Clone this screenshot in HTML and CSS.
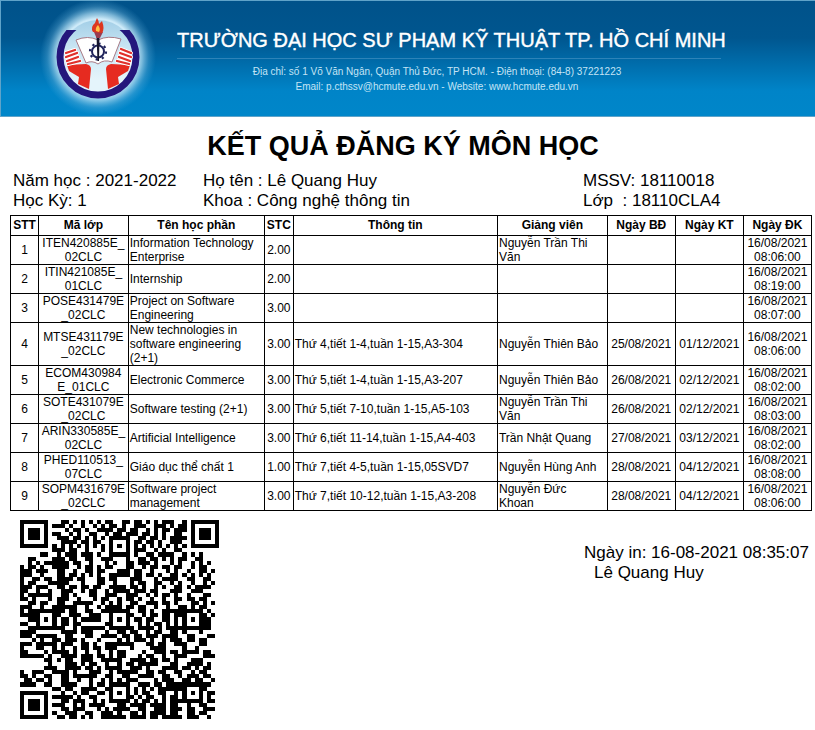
FILE: index.html
```html
<!DOCTYPE html>
<html lang="vi">
<head>
<meta charset="utf-8">
<meta name="viewport" content="width=device-width, initial-scale=1">
<title>Kết quả đăng ký môn học</title>
<link rel="stylesheet" href="styles.css">
</head>
<body>
<header class="banner">
  <svg class="logo" viewBox="40 0 120 116" role="img" aria-label="Logo">
    <defs>
      <radialGradient id="glow">
        <stop offset="0.66" stop-color="#cdeaf8"/>
        <stop offset="0.76" stop-color="#a5d6ee" stop-opacity="0.75"/>
        <stop offset="0.88" stop-color="#70b8df" stop-opacity="0.3"/>
        <stop offset="1" stop-color="#5bb0dd" stop-opacity="0"/>
      </radialGradient>
      <linearGradient id="inner" x1="0" y1="0" x2="0" y2="1">
        <stop offset="0" stop-color="#a3cfe7"/>
        <stop offset="0.35" stop-color="#c7e4f3"/>
        <stop offset="0.8" stop-color="#e4f4fb"/>
      </linearGradient>
      <clipPath id="open"><rect x="50" y="29" width="100" height="75"/></clipPath>
    </defs>
    <circle cx="98" cy="56" r="58" fill="url(#glow)"/>
    <circle cx="98" cy="56" r="37" fill="url(#inner)"/>
    <g clip-path="url(#open)"><circle cx="98" cy="56" r="38" fill="none" stroke="#24167c" stroke-width="7"/></g>
    <path d="M76 39Q88 34 98 39Q108 34 121 38L112 61Q104 58 98 63Q92 59 86 62Z" fill="#fff" stroke="#a87a86" stroke-width="1"/>
    <g fill="none" stroke="#20245c">
      <circle cx="98" cy="50.500" r="6" stroke-width="2"/>
      <circle cx="98" cy="50.500" r="8" stroke-width="2.200" stroke-dasharray="2.300 3.983"/>
    </g>
    <path d="M96.500 35H99.500L99 60H97.500Z" fill="#15152d"/>
    <path d="M94 31H103L100 37H96.500Z" fill="#983b50"/>
    <path d="M93 31Q90 26 95 22Q96 19 97 17Q99 20 99 23L102 20Q105 28 102 32Z" fill="#dc3620"/>
    <path d="M96 30Q95 27 98 24Q101 28 99 31Z" fill="#ffc044"/>
    <path d="M67 64L86 63Q91 64 91 68L89 88L78 83L79 76L69 70Z" fill="#e62b20"/>
    <path d="M130 64L111 63Q106 64 106 68L108 88L119 83L118 76L128 70Z" fill="#e62b20"/>
    <g fill="none" stroke="#fff" stroke-width="4" stroke-linecap="round">
      <path d="M66 52L75 49M66 56L77 52M67 60L78 56M68 63L80 60M131 52L121 48M131 56L120 52M130 60L119 56M129 63L117 60"/>
    </g>
    <g fill="none" stroke="#e0302b" stroke-width="2.300" stroke-linecap="round">
      <path d="M66 52L75 49M66 56L77 52M67 60L78 56M68 63L80 60M131 52L121 48M131 56L120 52M130 60L119 56M129 63L117 60"/>
    </g>
  </svg>
  <div class="school">
    <p class="school-name">TRƯỜNG ĐẠI HỌC SƯ PHẠM KỸ THUẬT TP. HỒ CHÍ MINH</p>
    <p class="school-contact">Địa chỉ: số 1 Võ Văn Ngân, Quận Thủ Đức, TP HCM. - Điện thoại: (84-8) 37221223<br>Email: p.cthssv@hcmute.edu.vn - Website: www.hcmute.edu.vn</p>
  </div>
</header>
<main class="page">
  <h1>KẾT QUẢ ĐĂNG KÝ MÔN HỌC</h1>
  <section class="student">
    <p>Năm học : 2021-2022<br>Học Kỳ: 1</p>
    <p>Họ tên : Lê Quang Huy<br>Khoa : Công nghệ thông tin</p>
    <p class="ids">MSSV: 18110018<br>Lớp  : 18110CLA4</p>
  </section>
  <table>
    <colgroup><col class="c-no"><col class="c-code"><col class="c-name"><col class="c-credit"><col class="c-info"><col class="c-teacher"><col class="c-date"><col class="c-date"><col class="c-date"></colgroup>
    <thead><tr><th>STT</th><th>Mã lớp</th><th>Tên học phần</th><th>STC</th><th>Thông tin</th><th>Giảng viên</th><th>Ngày BĐ</th><th>Ngày KT</th><th>Ngày ĐK</th></tr></thead>
    <tbody>
      <tr><td>1</td><td>ITEN420885E_<br>02CLC</td><td>Information Technology Enterprise</td><td>2.00</td><td></td><td>Nguyễn Trần Thi Văn</td><td></td><td></td><td>16/08/2021 08:06:00</td></tr>
      <tr><td>2</td><td>ITIN421085E_<br>01CLC</td><td>Internship</td><td>2.00</td><td></td><td></td><td></td><td></td><td>16/08/2021 08:19:00</td></tr>
      <tr><td>3</td><td>POSE431479E<br>_02CLC</td><td>Project on Software Engineering</td><td>3.00</td><td></td><td></td><td></td><td></td><td>16/08/2021 08:07:00</td></tr>
      <tr><td>4</td><td>MTSE431179E<br>_02CLC</td><td>New technologies in software engineering (2+1)</td><td>3.00</td><td>Thứ 4,tiết 1-4,tuần 1-15,A3-304</td><td>Nguyễn Thiên Bảo</td><td>25/08/2021</td><td>01/12/2021</td><td>16/08/2021 08:06:00</td></tr>
      <tr><td>5</td><td>ECOM430984<br>E_01CLC</td><td>Electronic Commerce</td><td>3.00</td><td>Thứ 5,tiết 1-4,tuần 1-15,A3-207</td><td>Nguyễn Thiên Bảo</td><td>26/08/2021</td><td>02/12/2021</td><td>16/08/2021 08:02:00</td></tr>
      <tr><td>6</td><td>SOTE431079E<br>_02CLC</td><td>Software testing (2+1)</td><td>3.00</td><td>Thứ 5,tiết 7-10,tuần 1-15,A5-103</td><td>Nguyễn Trần Thi Văn</td><td>26/08/2021</td><td>02/12/2021</td><td>16/08/2021 08:03:00</td></tr>
      <tr><td>7</td><td>ARIN330585E_<br>02CLC</td><td>Artificial Intelligence</td><td>3.00</td><td>Thứ 6,tiết 11-14,tuần 1-15,A4-403</td><td>Trần Nhật Quang</td><td>27/08/2021</td><td>03/12/2021</td><td>16/08/2021 08:02:00</td></tr>
      <tr><td>8</td><td>PHED110513_<br>07CLC</td><td>Giáo dục thể chất 1</td><td>1.00</td><td>Thứ 7,tiết 4-5,tuần 1-15,05SVD7</td><td>Nguyễn Hùng Anh</td><td>28/08/2021</td><td>04/12/2021</td><td>16/08/2021 08:08:00</td></tr>
      <tr><td>9</td><td>SOPM431679E<br>_02CLC</td><td>Software project management</td><td>3.00</td><td>Thứ 7,tiết 10-12,tuần 1-15,A3-208</td><td>Nguyễn Đức<br>Khoan</td><td>28/08/2021</td><td>04/12/2021</td><td>16/08/2021 08:06:00</td></tr>
    </tbody>
  </table>
  <footer class="foot">
    <svg class="qr" viewBox="0 0 49 49" role="img" aria-label="QR"><path id="qr-modules" shape-rendering="crispEdges"/></svg>
    <div class="signature"><p>Ngày in: 16-08-2021 08:35:07</p><p class="signer">Lê Quang Huy</p></div>
  </footer>
</main>
<script src="qr.js"></script>
</body>
</html>
```
FILE: styles.css
```css
* { box-sizing: border-box; }
body { margin: 0; background: #fff; color: #000; font-family: "Liberation Sans", Arial, sans-serif; }
p, h1 { margin: 0; }
.banner { display: flex; height: 117px; border: 1px solid #5fa3c9; border-right: 0; background: linear-gradient(#00528a 0%, #00568f 32%, #0084c8 78%, #0086c9 100%); color: #fff; }
.logo { flex: none; width: 120px; height: 116px; margin-left: 39px; }
.school { width: 544px; margin-left: 17px; padding-top: 25px; }
.school-name { padding-bottom: 4px; border-bottom: 1px solid #2d83b8; font-size: 20px; line-height: 28px; white-space: nowrap; -webkit-text-stroke: 1px #fff; -webkit-text-stroke-width: thin; }
.school-contact { margin-top: 5px; padding-right: 24px; color: #c4e4f5; font-size: 10px; line-height: 15px; text-align: center; white-space: nowrap; }
.page { padding: 12px 3px 10px 10px; }
h1 { padding-right: 16px; font-size: 27px; line-height: 34px; text-align: center; }
.student { display: grid; grid-template-columns: 190fr 380fr 229fr; margin-top: 8px; padding-left: 3px; font-size: 17px; line-height: 20px; }
.ids { white-space: pre-wrap; }
table { width: 100%; margin-top: 4px; border-collapse: collapse; table-layout: fixed; font-size: 12px; line-height: 14px; }
.c-no { width: 3.5%; }
.c-code { width: 11.2%; }
.c-name { width: 17%; }
.c-credit { width: 3.6%; }
.c-info { width: 25.5%; }
.c-teacher { width: 13.7%; }
.c-date { width: 8.5%; }
th, td { padding: 0 1px; border: 1px solid #000; text-align: center; vertical-align: middle; }
th { height: 20px; padding-bottom: 2px; white-space: nowrap; }
td { height: 29px; }
td:nth-child(3), td:nth-child(5), td:nth-child(6) { text-align: left; }
.foot { display: flex; justify-content: space-between; padding: 9px 7px 0 10px; }
.qr { width: 199px; height: 199px; }
.signature { width: 221px; padding-top: 23px; font-size: 17px; line-height: 20px; white-space: nowrap; }
.signer { padding-left: 10px; }
```
FILE: qr.js
```js
const rows = [
  "#######...##.#.#.#.#.##..##.##.#.#.###..#.#######",
  "#.....#.###.#..#..#.#.##.#..###..###.#.##.#.....#",
  "#.###.#....#.##.#..####.##.##..#.#.##.###.#.###.#",
  "#.###.#.##..#.#..##..#.##.###.##.#.#..##..#.###.#",
  "#.###.#..###.##.#.#.#..####..##.##.#.####.#.###.#",
  "#.....#...####.##.##..#..#..##.##.#..###..#.....#",
  "#######.#.#.#.#.#.#.#.#.#.#.#.#.#.#.#.#.#.#######",
  "........###.##..#...#.#...#.###..#.#..##.........",
  ".....##..#.###.###.#..#####.#..##.####..#.#.#....",
  "..##..#.###.##..##..###...#..##.##.#.#.##..##....",
  "..#.#.######.##..#...#.#..##.###.#...#.#..#.#.#..",
  "#.##.#..####..#.##.#.##...##..#.##.##.##..#.##...",
  "###.###..##..#..##.##...###.##..#...#.#..#..##.#.",
  "###..##..##.##.#.#.#..#####.##.##.#..##.#.#.#.#..",
  "#..##..#.####.##...##.##...###...#.####..##..##..",
  "#.##..######...#...##..#...#.##..##..#.#..#..#.#.",
  "###.###..##.##.##.##..####.##.#..#.#..##.#.####..",
  "##..#..#..###..#.##..#.####.###.##...###..###....",
  "#.####.#..##.#...##..###..###..#.#.##.#..#...##..",
  "##.#..##.###..#...#.##..#.##.#..#..#..##.##.##...",
  "..##.##..##..#####..#.#.#..##..###.##.#...##.#.#.",
  "###..#..######..#..#.####.##.##..#..#..##.#.##...",
  "#.##.######.##..##..#######..##.#..##########.#..",
  "####..#.##..###..###..#...##..#.##.##.###...##.#.",
  "..##.####.##.#.#####..#.#.#.##.##..##.#.#.#.###..",
  "##..#.#...##.##......##...#..#.#.##.#.#.#...###..",
  "..##.######..#.######.######.####.#.####.######..",
  "####......####.###...#..##.##..#.##..##.#...#....",
  "###.##.##..##...##..####.##.##.###.####..##...##.",
  "...#.##.##.###.#...#....#.#.###.#..#.###.##.##...",
  "###.##.##.###..##.#..#######...##.##..###...##...",
  "#...###.#.#..#.##.##.###...#....####....#..#.....",
  "##......####.#..#..#..#.##....#..###.##.####.##..",
  "########..####.###.##.#.##...#.##..#..###....###.",
  ".......#.#.##..###..#####..####.##.##.#...###....",
  "......##...###.#.##..#..#.##.#####...##..####.#..",
  "......###..####.##.#.####..###.#...####.##.#.##..",
  "#..####.####.#...###..#.#####..##.##..##..#.##...",
  "##.#...#..##.######..##..##..####..##..#.###.##..",
  ".##.####..##..#..#..#.#.#.###....#.###..##.##..#.",
  "####..##..####...#.##..####..###.##.#######..##..",
  "........##.##..####..#.##.#.#.#.#.#######.##.#...",
  "#######...#..#.##..##.#.#.#.#.##..##..#.#.#.#.##.",
  "#.....#.#####.#..##...#...##.#.##..#.##.#...#.#..",
  "#.###.#...##.###..#.#.####..#.##.#.#.########.##.",
  "#.###.#.###..#.#.####...##.####.####.##..#..##...",
  "#.###.#...##.###...#.#.####..##..###.###.##..###.",
  "#.....#.#..###..##..###.#..##.#.####.##..##.##...",
  "#######..##.##.#.#..######.####.##.#####.###..#.."
].map(row => row.split(""));

// Concentric square pattern centred on (cx, cy)
function marker(cx, cy, radius) {
  for (let y = -radius; y <= radius; y++) {
    for (let x = -radius; x <= radius; x++) {
      if (!rows[cy + y] || cx + x < 0 || cx + x > 48) continue;
      const ring = Math.max(Math.abs(x), Math.abs(y));
      const light = radius === 4 ? ring === 4 || ring === 2 : ring === 1;
      rows[cy + y][cx + x] = light ? "." : "#";
    }
  }
}

for (let i = 8; i < 41; i++) rows[i][6] = rows[6][i] = i % 2 ? "." : "#";
[[3, 3], [45, 3], [3, 45]].forEach(([x, y]) => marker(x, y, 4));
[[24, 6], [6, 24], [24, 24], [42, 24], [24, 42], [42, 42]].forEach(([x, y]) => marker(x, y, 2));

let path = "";
rows.forEach((row, y) => row.forEach((cell, x) => {
  if (cell === "#") path += `M${x} ${y}h1v1h-1z`;
}));
document.getElementById("qr-modules").setAttribute("d", path);
```
